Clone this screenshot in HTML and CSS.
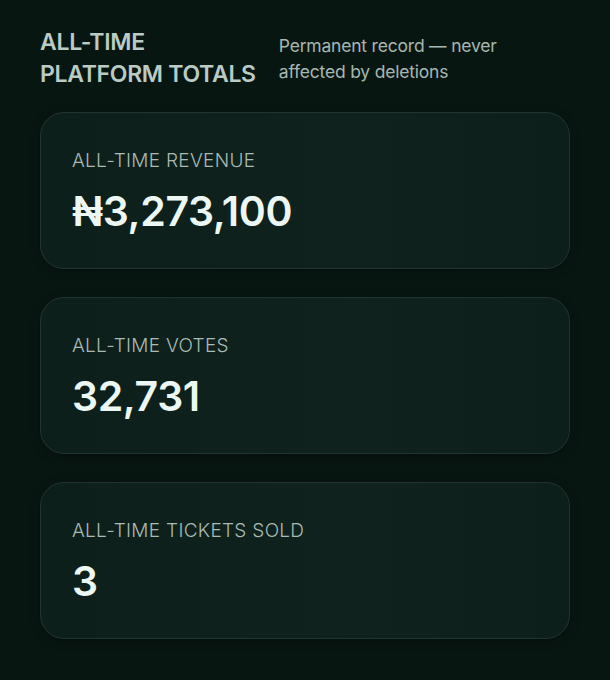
FILE: index.html
```html
<!DOCTYPE html>
<html>
<head>
  <title>All-time Platform Totals</title>
  <link rel="stylesheet" href="styles.css">
</head>
<body>
  <div class="panel">
    <div class="panel-head">
      <h2>ALL-TIME<br>PLATFORM TOTALS</h2>
      <p>Permanent record — never affected by deletions</p>
    </div>

    <div class="stat">
      <div class="stat-label">ALL-TIME REVENUE</div>
      <div class="stat-value">₦3,273,100</div>
    </div>

    <div class="stat">
      <div class="stat-label">ALL-TIME VOTES</div>
      <div class="stat-value">32,731</div>
    </div>

    <div class="stat">
      <div class="stat-label">ALL-TIME TICKETS SOLD</div>
      <div class="stat-value">3</div>
    </div>
  </div>
</body>
</html>
```

FILE: styles.css
```css
body { margin: 0; background: #081612; font-family: Inter, "Noto Sans", sans-serif; color: #e9f4ef; }
.panel { padding: 26px 40px 40px; display: flex; flex-direction: column; gap: 28px; }
.panel-head { display: flex; gap: 23px; align-items: flex-start; margin-bottom: -6px; }
.panel-head h2 { margin: 0; font-size: 23px; font-weight: 600; line-height: 32px; color: #b9cbc3; letter-spacing: -0.3px; white-space: nowrap; }
.panel-head p { margin: 7px 0 0; font-size: 17.5px; line-height: 26px; color: #a6b7b0; font-weight: 400; max-width: 250px; letter-spacing: -0.2px; }
.stat { height: 157px; box-sizing: border-box; padding: 36px 31px 0; border-radius: 24px; border: 1px solid #203530; background: linear-gradient(90deg, #0d1f1a, #0f221d 60%, #0d1f1a); box-shadow: 0 2px 10px rgba(0,0,0,0.35); }
.stat-label { font-size: 19px; font-weight: 300; color: #a9bbb4; line-height: 24px; letter-spacing: 0.3px; }
.stat-value { margin-top: 14px; font-size: 41px; font-weight: 600; line-height: 48px; color: #ecf7f3; letter-spacing: -0.4px; }
```
